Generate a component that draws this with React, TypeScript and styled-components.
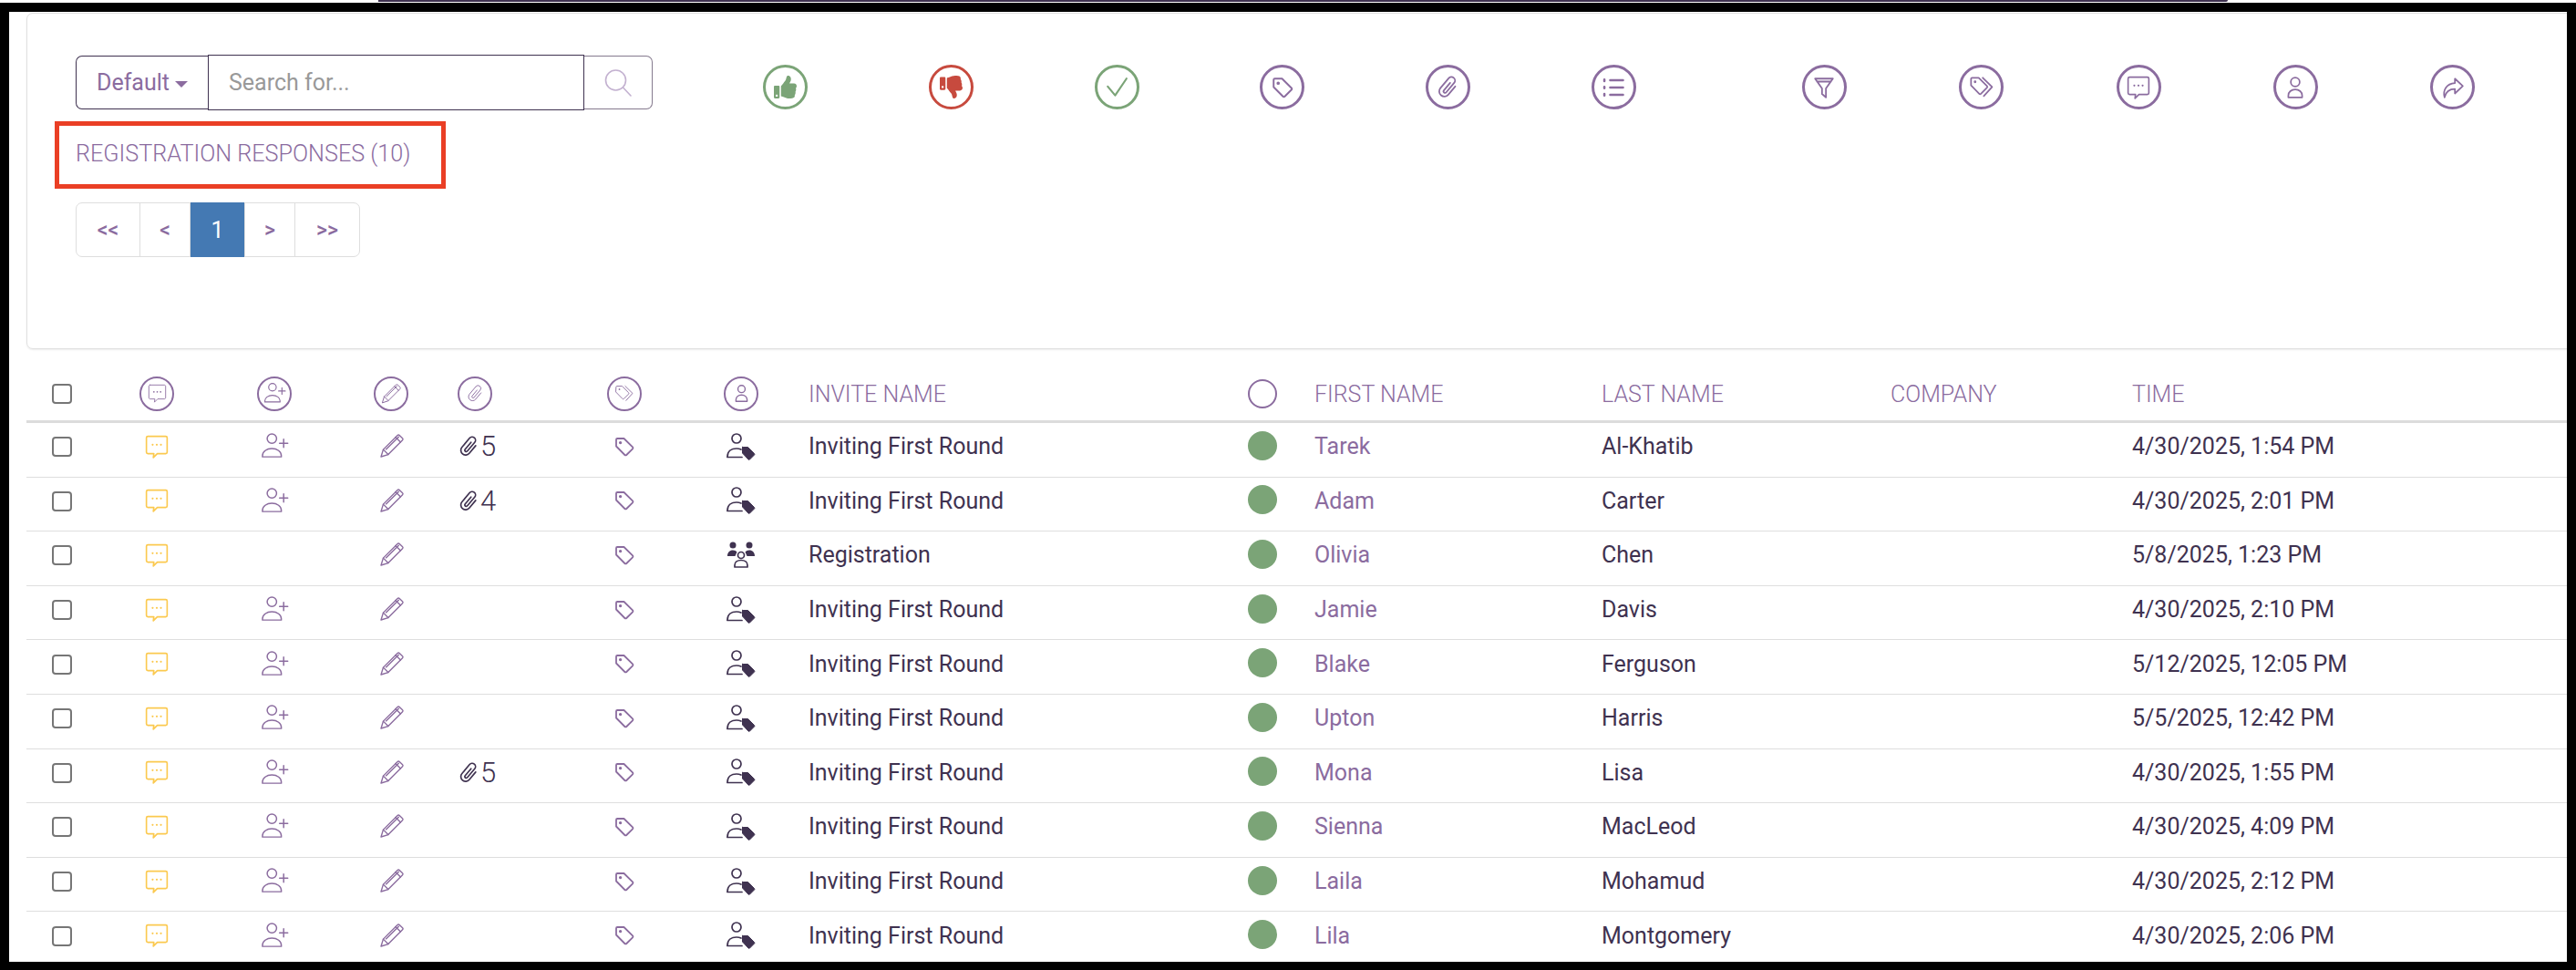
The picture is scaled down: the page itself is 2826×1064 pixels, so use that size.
import React from "react";
import styled, { createGlobalStyle, css } from "styled-components";
import { FaThumbsUp, FaThumbsDown } from "react-icons/fa";

const purple = "#8b6c9f";
const dark = "#3f3250";
const green = "#7ba477";
const red = "#c74a3e";
const yellow = "#fbc94f";

const GlobalStyle = createGlobalStyle`
  html, body {
    margin: 0;
    background: #fff;
    font-family: Roboto, "Liberation Sans", sans-serif;
  }
  * { box-sizing: border-box; }
`;

const TopStrip = styled.div`
  height: 3px;
  padding-left: 415px;
  padding-right: 382px;
`;

const StripLine = styled.div`
  height: 2px;
  background: ${dark};
  border-radius: 0 0 4px 0;
`;

const Frame = styled.div`
  height: 1061px;
  border: solid #000;
  border-width: 10px 10px 9px 10px;
  overflow: hidden;
`;

const Panel = styled.section`
  display: flex;
  align-items: flex-start;
  height: 369px;
  margin: 1px -12px 0 19px;
  padding: 46px 0 0 53px;
  border: 1px solid #e0e0e0;
  border-radius: 7px;
  box-shadow: 0 1px 2px rgba(0, 0, 0, 0.08);
`;

const LeftBlock = styled.div`
  width: 633px;
`;

const SearchBar = styled.div`
  display: flex;
  align-items: center;
  height: 59px;
`;

const DefaultButton = styled.button`
  display: flex;
  align-items: center;
  gap: 6px;
  width: 145px;
  height: 59px;
  padding: 0 0 0 22px;
  background: #fff;
  border: 1.5px solid ${dark};
  border-right: none;
  border-radius: 7px 0 0 7px;
  color: ${purple};
  font: 400 25px Roboto, sans-serif;
`;

const Caret = styled.span`
  width: 0;
  height: 0;
  margin-top: 4px;
  border-left: 7px solid transparent;
  border-right: 7px solid transparent;
  border-top: 7px solid ${purple};
`;

const SearchInput = styled.input`
  width: 413px;
  height: 61px;
  padding: 0 22px;
  border: 1.5px solid ${dark};
  background: #fff;
  font: 400 25px Roboto, sans-serif;
  outline: none;
  &::placeholder {
    color: #999;
    opacity: 1;
  }
`;

const SearchButton = styled.button`
  display: flex;
  align-items: center;
  justify-content: center;
  width: 75px;
  height: 59px;
  padding: 0;
  background: #fff;
  border: 1px solid #857a8e;
  border-left: none;
  border-radius: 0 7px 7px 0;
  color: #c3b1d0;
`;

const Heading = styled.div`
  width: 429px;
  height: 74px;
  margin: 13px 0 15px -23px;
  padding: 0 0 0 18px;
  border: 5px solid #ea3f25;
  color: ${purple};
  font-size: 25.2px;
  font-weight: 300;
  line-height: 62px;
  white-space: nowrap;
`;

const Pagination = styled.nav`
  display: inline-flex;
  height: 60px;
  border: 1px solid #dedede;
  border-radius: 7px;
`;

const PageCell = styled.span<{ $w: number; $active?: boolean }>`
  display: flex;
  align-items: center;
  justify-content: center;
  width: ${({ $w }) => $w}px;
  margin: ${({ $active }) => ($active ? "-1px 0" : "0")};
  font-size: ${({ $active }) => ($active ? 25 : 23)}px;
  font-weight: ${({ $active }) => ($active ? 400 : 500)};
  color: ${({ $active }) => ($active ? "#fff" : purple)};
  background: ${({ $active }) => ($active ? "#4479b3" : "transparent")};
  & + & {
    border-left: ${({ $active }) => ($active ? "none" : "1px solid #dedede")};
  }
`;

const Actions = styled.div`
  display: flex;
  margin: 10px 0 0 121px;
`;

const ActionGroup = styled.div<{ $gap: number; $ml?: number }>`
  display: flex;
  gap: ${({ $gap }) => $gap}px;
  margin-left: ${({ $ml }) => $ml ?? 0}px;
`;

const Ring = styled.span<{ $size: number; $color?: string; $sw?: number }>`
  display: inline-flex;
  align-items: center;
  justify-content: center;
  flex: none;
  width: ${({ $size }) => $size}px;
  height: ${({ $size }) => $size}px;
  border: ${({ $sw }) => $sw ?? 3}px solid ${({ $color }) => $color ?? purple};
  border-radius: 50%;
  color: ${({ $color }) => $color ?? purple};
`;

const rowGrid = css`
  display: grid;
  grid-template-columns: 78px 130px 128px 128px 107px 170px 86px 504px 50px 347px 317px 265px 1fr;
  align-items: center;
`;

const Table = styled.div`
  margin: 0 -12px 0 19px;
`;

const HeaderRow = styled.div`
  ${rowGrid}
  height: 81px;
  padding-top: 19px;
  border-bottom: 3px solid #dcdcdc;
`;

const Row = styled.div`
  ${rowGrid}
  height: 59.6px;
  padding-bottom: 7px;
  border-bottom: 1.2px solid #dedede;
  color: ${dark};
  font-size: 25px;
`;

const IconCell = styled.div<{ $color?: string }>`
  display: flex;
  align-items: center;
  justify-content: center;
  color: ${({ $color }) => $color ?? purple};
`;

const AttachCell = styled.div`
  display: flex;
  align-items: center;
  gap: 0;
  padding-left: 9px;
  color: ${dark};
  font-size: 31px;
  font-weight: 300;
  line-height: 1;
`;

const Box = styled.input.attrs({ type: "checkbox" })`
  appearance: none;
  width: 22px;
  height: 22px;
  margin: 1px 0 0;
  border: 2px solid #767676;
  border-radius: 4px;
  background: #fff;
`;

const HeadText = styled.div<{ $pad?: number }>`
  margin-top: 2px;
  padding-left: ${({ $pad }) => $pad ?? 0}px;
  color: ${purple};
  font-size: 25px;
  font-weight: 300;
  white-space: nowrap;
`;

const CellText = styled.div<{ $pad?: number; $link?: boolean }>`
  padding-left: ${({ $pad }) => $pad ?? 0}px;
  color: ${({ $link }) => ($link ? purple : dark)};
  white-space: nowrap;
`;

const Dot = styled.span`
  width: 32px;
  height: 32px;
  margin-top: -2px;
  border-radius: 50%;
  background: ${green};
`;

const OpenDot = styled.span`
  width: 32px;
  height: 32px;
  border-radius: 50%;
  border: 2px solid ${purple};
`;

type IconProps = { size?: number };

const Svg = styled.svg`
  display: block;
  flex: none;
  fill: none;
  stroke: currentColor;
  stroke-linecap: round;
  stroke-linejoin: round;
`;

const line = (size: number, sw: number, children: React.ReactNode) => (
  <Svg width={size} height={size} viewBox="0 0 24 24" strokeWidth={sw}>
    {children}
  </Svg>
);

const Check = ({ size = 26 }: IconProps) => line(size, 2, <path d="M3 11l7.500 9L22 3" />);

const Tag = ({ size = 24 }: IconProps) =>
  line(
    size,
    1.8,
    <>
      <path d="M3 4.200C3 3.500 3.500 3 4.200 3H11.500L21 12.400c.6.6.6 1.300 0 1.900L14.300 21c-.6.6-1.300.6-1.900 0L3 11.500z" />
      <circle cx="7.600" cy="7.600" r=".8" fill="currentColor" />
    </>
  );

const Tags = ({ size = 26, sw = 1.5 }: IconProps & { sw?: number }) =>
  line(
    size,
    sw,
    <>
      <path d="M2 3.800C2 3.200 2.400 2.800 3 2.800H9.200L17 10.600c.5.5.5 1.100 0 1.600l-5.700 5.700c-.5.5-1.100.5-1.600 0L2 10z" />
      <circle cx="5.800" cy="6.600" r=".5" fill="currentColor" />
      <path d="M13 2.800 21.800 11.400 14 20" />
    </>
  );

const Clip = ({ size = 25, sw = 1.6 }: IconProps & { sw?: number }) =>
  line(
    size,
    sw,
    <g transform="rotate(40 12 12)">
      <path d="M17 7v10.500a5 5 0 0 1-10 0V5a3.500 3.500 0 0 1 7 0v12a1.500 1.500 0 0 1-3 0V7.500" />
    </g>
  );

const ListIcon = ({ size = 28 }: IconProps) =>
  line(
    size,
    2.2,
    <>
      <path d="M3.500 4.500v1.400M3.500 11.300v1.400M3.500 18.100v1.400" />
      <path d="M9 5.200h12M9 12h12M9 18.800h12" />
    </>
  );

const Funnel = ({ size = 26 }: IconProps) =>
  line(size, 1.7, <path d="M3 3h18l-7 10v9l-4-3.500V13zM5 6h14" />);

const Chat = ({ size = 26, sw = 1.5 }: IconProps & { sw?: number }) =>
  line(
    size,
    sw,
    <>
      <path d="M3 1.500h18c.8 0 1.500.7 1.500 1.500v14.500c0 .8-.7 1.500-1.500 1.500h-8.500L8.500 23 9 19H3c-.8 0-1.500-.7-1.500-1.500V3c0-.8.7-1.500 1.500-1.500z" />
      <circle cx="7.800" cy="10" r="1" fill="currentColor" stroke="none" />
      <circle cx="12" cy="10" r="1" fill="currentColor" stroke="none" />
      <circle cx="16.200" cy="10" r="1" fill="currentColor" stroke="none" />
    </>
  );

const Person = ({ size = 26 }: IconProps) =>
  line(
    size,
    1.6,
    <>
      <circle cx="12" cy="6.500" r="4.500" />
      <path d="M5 22v-1.800C5 16.500 8 14 12 14s7 2.500 7 6.200V22z" />
    </>
  );

const Share = ({ size = 26 }: IconProps) =>
  line(size, 1.6, <path d="M14 3l8 7.500-8 7.500v-4.500c-5 0-9 1.600-10.500 8.500C1.500 15 5.500 8 14 7.500z" />);

const PersonPlus = ({ size = 31, sw = 1.15 }: IconProps & { sw?: number }) =>
  line(
    size,
    sw,
    <>
      <circle cx="9.500" cy="5.500" r="4" />
      <path d="M1.500 21v-1c0-3.500 3.500-6 8-6s8 2.500 8 6v1z" />
      <path d="M19.500 6v7M16 9.500h7" />
    </>
  );

const Pencil = ({ size = 29, sw = 1.15 }: IconProps & { sw?: number }) =>
  line(
    size,
    sw,
    <>
      <path d="M2.500 21.500l2-6.500L17.500 2c.5-.5 1.200-.5 1.700 0l2.800 2.800c.5.5.5 1.200 0 1.700L9 19.500z" />
      <path d="M4.500 15 9 19.500M7 14.800 18.500 3.500M15.700 3.800l4.500 4.500" />
    </>
  );

const PersonTag = ({ size = 32 }: IconProps) => (
  <Svg width={size} height={size} viewBox="0 0 32 32" strokeWidth={1.7}>
    <circle cx="11" cy="7" r="5" />
    <path d="M1 27c0-6 4.500-9 10-9 2 0 3.500.3 5 1" />
    <path d="M1 27.500h16" />
    <path
      d="M18.500 16.500h5l7 7c.5.5.5 1 0 1.500l-5 5c-.5.5-1 .5-1.500 0l-6.500-7v-6.500z"
      fill="currentColor"
      strokeWidth={1}
    />
  </Svg>
);

const Group = ({ size = 32 }: IconProps) => (
  <Svg width={size} height={size} viewBox="0 0 32 32" strokeWidth={1.7}>
    <circle cx="7" cy="5" r="3.500" fill="currentColor" stroke="none" />
    <circle cx="25" cy="5" r="3.500" fill="currentColor" stroke="none" />
    <path d="M1 17c0-4 2.500-6.500 6-6.500 2 0 3.500.8 4.500 2L9.500 17zM31 17c0-4-2.500-6.500-6-6.500-2 0-3.500.8-4.500 2L22.500 17z" fill="currentColor" stroke="none" />
    <circle cx="16" cy="16" r="3.500" />
    <path d="M9 29v-2c0-3.500 3-5.500 7-5.500s7 2 7 5.500v2z" />
  </Svg>
);

const SearchGlyph = () => (
  <Svg width={32} height={32} viewBox="0 0 32 32" strokeWidth={1.6}>
    <circle cx="13.500" cy="13" r="11" />
    <path d="M21.500 21l8.500 9" />
  </Svg>
);

type Resp = {
  first: string;
  last: string;
  time: string;
  attach?: number;
  invite?: string;
};

const responses: Resp[] = [
  { first: "Tarek", last: "Al-Khatib", time: "4/30/2025, 1:54 PM", attach: 5 },
  { first: "Adam", last: "Carter", time: "4/30/2025, 2:01 PM", attach: 4 },
  { first: "Olivia", last: "Chen", time: "5/8/2025, 1:23 PM", invite: "Registration" },
  { first: "Jamie", last: "Davis", time: "4/30/2025, 2:10 PM" },
  { first: "Blake", last: "Ferguson", time: "5/12/2025, 12:05 PM" },
  { first: "Upton", last: "Harris", time: "5/5/2025, 12:42 PM" },
  { first: "Mona", last: "Lisa", time: "4/30/2025, 1:55 PM", attach: 5 },
  { first: "Sienna", last: "MacLeod", time: "4/30/2025, 4:09 PM" },
  { first: "Laila", last: "Mohamud", time: "4/30/2025, 2:12 PM" },
  { first: "Lila", last: "Montgomery", time: "4/30/2025, 2:06 PM" },
];

const App = () => (
  <>
    <GlobalStyle />
    <TopStrip>
      <StripLine />
    </TopStrip>
    <Frame>
      <Panel>
        <LeftBlock>
          <SearchBar>
            <DefaultButton>
              Default
              <Caret />
            </DefaultButton>
            <SearchInput placeholder="Search for..." />
            <SearchButton>
              <SearchGlyph />
            </SearchButton>
          </SearchBar>
          <Heading>REGISTRATION RESPONSES (10)</Heading>
          <Pagination>
            <PageCell $w={69}>&lt;&lt;</PageCell>
            <PageCell $w={55}>&lt;</PageCell>
            <PageCell $w={60} $active>
              1
            </PageCell>
            <PageCell $w={55}>&gt;</PageCell>
            <PageCell $w={71}>&gt;&gt;</PageCell>
          </Pagination>
        </LeftBlock>
        <Actions>
          <ActionGroup $gap={132.8}>
            <Ring $size={49} $color={green}>
              <FaThumbsUp size={25} />
            </Ring>
            <Ring $size={49} $color={red}>
              <FaThumbsDown size={25} />
            </Ring>
            <Ring $size={49} $color={green}>
              <Check />
            </Ring>
            <Ring $size={49}>
              <Tag size={26} />
            </Ring>
            <Ring $size={49}>
              <Clip size={27} />
            </Ring>
            <Ring $size={49}>
              <ListIcon />
            </Ring>
          </ActionGroup>
          <ActionGroup $gap={123.3} $ml={182}>
            <Ring $size={49}>
              <Funnel />
            </Ring>
            <Ring $size={49}>
              <Tags size={28} />
            </Ring>
            <Ring $size={49}>
              <Chat />
            </Ring>
            <Ring $size={49}>
              <Person />
            </Ring>
            <Ring $size={49}>
              <Share />
            </Ring>
          </ActionGroup>
        </Actions>
      </Panel>
      <Table>
        <HeaderRow>
          <IconCell>
            <Box />
          </IconCell>
          <IconCell>
            <Ring $size={38} $sw={2.2}>
              <Chat size={21} sw={1} />
            </Ring>
          </IconCell>
          <IconCell>
            <Ring $size={38} $sw={2.2}>
              <PersonPlus size={25} sw={1.1} />
            </Ring>
          </IconCell>
          <IconCell>
            <Ring $size={38} $sw={2.2}>
              <Pencil size={24} sw={1} />
            </Ring>
          </IconCell>
          <AttachCell>
            <Ring $size={38} $sw={2.2}>
              <Clip size={21} sw={1} />
            </Ring>
          </AttachCell>
          <IconCell>
            <Ring $size={38} $sw={2.2}>
              <Tags size={22} sw={1} />
            </Ring>
          </IconCell>
          <IconCell>
            <Ring $size={38} $sw={2.2}>
              <Person size={21} />
            </Ring>
          </IconCell>
          <HeadText $pad={31}>INVITE NAME</HeadText>
          <IconCell>
            <OpenDot />
          </IconCell>
          <HeadText $pad={32}>FIRST NAME</HeadText>
          <HeadText>LAST NAME</HeadText>
          <HeadText>COMPANY</HeadText>
          <HeadText>TIME</HeadText>
        </HeaderRow>
        {responses.map((r) => (
          <Row key={r.first}>
            <IconCell>
              <Box />
            </IconCell>
            <IconCell $color={yellow}>
              <Chat />
            </IconCell>
            <IconCell>{r.invite ? null : <PersonPlus />}</IconCell>
            <IconCell>
              <Pencil />
            </IconCell>
            <AttachCell>
              {r.attach ? (
                <>
                  <Clip />
                  {r.attach}
                </>
              ) : null}
            </AttachCell>
            <IconCell>
              <Tag />
            </IconCell>
            <IconCell $color={dark}>{r.invite ? <Group /> : <PersonTag />}</IconCell>
            <CellText $pad={31}>{r.invite ?? "Inviting First Round"}</CellText>
            <IconCell>
              <Dot />
            </IconCell>
            <CellText $pad={32} $link>
              {r.first}
            </CellText>
            <CellText>{r.last}</CellText>
            <div />
            <CellText>{r.time}</CellText>
          </Row>
        ))}
      </Table>
    </Frame>
  </>
);

export default App;
